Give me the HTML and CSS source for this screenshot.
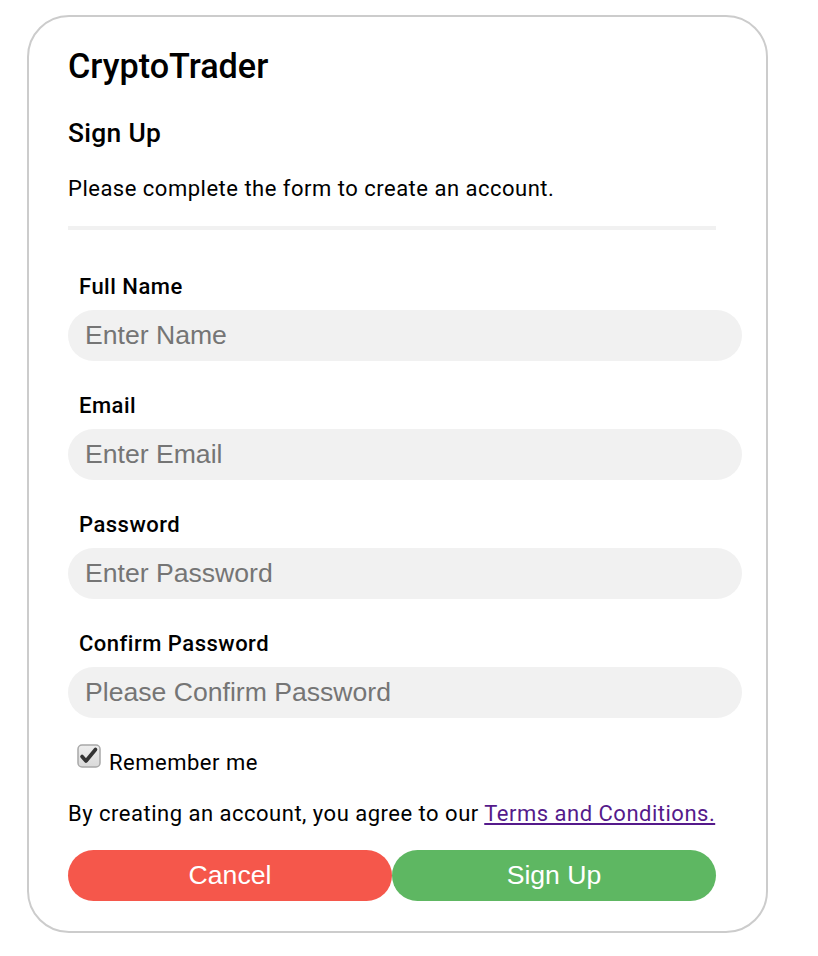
FILE: index.html
```html
<!DOCTYPE html>
<html lang="en">
<head>
<meta charset="utf-8">
<title>CryptoTrader - Sign Up</title>
<link rel="stylesheet" href="styles.css">
</head>
<body>
<form class="card">
  <h1 class="brand">CryptoTrader</h1>
  <h2 class="title">Sign Up</h2>
  <p class="intro">Please complete the form to create an account.</p>
  <div class="rule"></div>

  <label class="field-label" for="name">Full Name</label>
  <input class="field" id="name" type="text" placeholder="Enter Name">

  <label class="field-label" for="email">Email</label>
  <input class="field" id="email" type="text" placeholder="Enter Email">

  <label class="field-label" for="psw">Password</label>
  <input class="field" id="psw" type="password" placeholder="Enter Password">

  <label class="field-label" for="psw2">Confirm Password</label>
  <input class="field" id="psw2" type="password" placeholder="Please Confirm Password">

  <div class="remember">
    <svg class="check" width="24" height="24" viewBox="0 0 24 24" aria-hidden="true">
      <defs>
        <linearGradient id="cbg" x1="0" y1="0" x2="0" y2="1">
          <stop offset="0" stop-color="#eeeeee"/>
          <stop offset="1" stop-color="#d9d9d9"/>
        </linearGradient>
      </defs>
      <rect x="1" y="1" width="22" height="22" rx="4" ry="4" fill="url(#cbg)" stroke="#a8a8a8" stroke-width="1.5"/>
      <path d="M5 12.5 L9 17 L18.5 5.5" fill="none" stroke="#333333" stroke-width="3.6" stroke-linecap="round" stroke-linejoin="round"/>
    </svg>
    <span class="remember-text">Remember me</span>
  </div>

  <p class="terms">By creating an account, you agree to our <a class="terms-link" href="#">Terms and Conditions.</a></p>

  <div class="actions">
    <button type="button" class="btn btn-cancel">Cancel</button>
    <button type="button" class="btn btn-signup">Sign Up</button>
  </div>
</form>
</body>
</html>
```
FILE: styles.css
```css
html, body {
  margin: 0;
  padding: 0;
  background: #ffffff;
}

body {
  font-family: Roboto, "Liberation Sans", Arial, sans-serif;
  color: #000000;
}

.card {
  box-sizing: border-box;
  width: 741px;
  margin: 15px 0 0 27px;
  border: 2px solid #cccccc;
  border-radius: 42px;
  padding: 0 50px 30px 39px;
  display: flex;
  flex-direction: column;
  align-items: flex-start;
}

.brand {
  margin: 29px 0 0 0;
  font-size: 34.2px;
  line-height: 40px;
  font-weight: 500;
}

.title {
  margin: 31px 0 0 0;
  font-size: 26.4px;
  line-height: 32px;
  font-weight: 500;
  letter-spacing: 0.3px;
}

.intro {
  margin: 27px 0 0 0;
  font-size: 22px;
  line-height: 26px;
  letter-spacing: 0.5px;
}

.rule {
  align-self: stretch;
  height: 4px;
  background: #f1f1f1;
  margin-top: 24px;
}

.field-label {
  display: block;
  margin: 32px 0 0 11px;
  font-size: 22px;
  line-height: 26px;
  font-weight: 500;
  letter-spacing: 0.5px;
}

.rule + .field-label {
  margin-top: 44px;
}

.field {
  box-sizing: border-box;
  width: calc(100% + 26px);
  height: 51px;
  margin-top: 10px;
  border: 0;
  border-radius: 26px;
  background: #f1f1f1;
  padding: 0 16px 0 17px;
  font-family: "Liberation Sans", Arial, sans-serif;
  font-size: 26.6px;
  color: #000000;
  outline: none;
}

.field::placeholder {
  color: #757575;
  opacity: 1;
}

.remember {
  display: flex;
  align-items: flex-start;
  margin-top: 26px;
  margin-left: 9px;
}

.check {
  display: block;
  flex: none;
}

.remember-text {
  margin-left: 8px;
  margin-top: 6px;
  font-size: 22px;
  line-height: 26px;
  letter-spacing: 0.5px;
}

.terms {
  margin: 25px 0 0 0;
  font-size: 22px;
  line-height: 26px;
  letter-spacing: 0.5px;
}

.terms-link {
  color: #551a8b;
  text-decoration: underline;
}

.actions {
  display: flex;
  align-self: stretch;
  margin-top: 23px;
}

.btn {
  flex: 1 1 0;
  height: 51px;
  border: 0;
  border-radius: 26px;
  padding: 0;
  font-family: "Liberation Sans", Arial, sans-serif;
  font-size: 26.6px;
  color: #ffffff;
  cursor: pointer;
}

.btn-cancel {
  background: #f5574b;
}

.btn-signup {
  background: #5eb762;
}
```
